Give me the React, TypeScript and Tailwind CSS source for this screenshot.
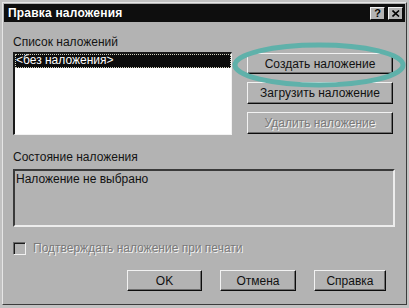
import React from "react";

const font = { fontFamily: '"Liberation Sans", Arial, sans-serif' };

function Btn({ children, disabled, className = "" }: { children: React.ReactNode; disabled?: boolean; className?: string }) {
  return (
    <div
      className={`flex items-center justify-center border-t border-l border-[#f2f2f2] border-r border-b border-r-[#0c0c0c] border-b-[#0c0c0c] shadow-[inset_-1px_-1px_0_#6e6e6e] bg-[#b3b3b3] text-[12px] ${
        disabled ? "text-[#7a7a7a] [text-shadow:1px_1px_0_#f4f4f4]" : "text-[#111]"
      } ${className}`}
    >
      {children}
    </div>
  );
}

export default function App() {
  return (
    <div className="w-[409px] h-[308px] bg-[#c2c2c2] overflow-hidden" style={font}>
      <div className="ml-[2px] mt-[2px] w-[405px] h-[303px] bg-[#b3b3b3] border-t border-l border-[#e6e6e6] border-r border-b border-r-[#3c3c3c] border-b-[#3c3c3c] flex flex-col relative">
        {/* title bar */}
        <div className="mx-[1px] mt-[1px] h-[18px] bg-[#0e0e0e] flex items-center justify-between pl-[4px] pr-[2px]">
          <span className="text-white font-bold text-[12px] tracking-[0.2px]">Правка наложения</span>
          <div className="flex">
            <div className="w-[15px] h-[13px] bg-[#b3b3b3] border-t border-l border-[#f2f2f2] border-r border-b border-r-[#0c0c0c] border-b-[#0c0c0c] flex items-center justify-center text-[11px] font-bold leading-none text-black">?</div>
            <div className="ml-[3px] w-[15px] h-[13px] bg-[#b3b3b3] border-t border-l border-[#f2f2f2] border-r border-b border-r-[#0c0c0c] border-b-[#0c0c0c] flex items-center justify-center">
              <svg width="8" height="7" viewBox="0 0 8 7">
                <path d="M0.5 0.5 L7 6.5 M7 0.5 L0.5 6.5" stroke="#000" strokeWidth="1.6" />
              </svg>
            </div>
          </div>
        </div>

        <div className="px-[10px] flex flex-col">
          <div className="mt-[13px] text-[12px] leading-[14px] text-[#141414]">Список наложений</div>
          <div className="mt-[3px] flex">
            {/* listbox */}
            <div className="w-[219px] h-[83px] border-t-2 border-l-2 border-t-[#1a1a1a] border-l-[#1a1a1a] border-r border-b border-r-[#f2f2f2] border-b-[#f2f2f2] bg-white">
              <div className="h-[14px] bg-[#0c0c0c] text-white text-[12px] leading-[13px] pl-[1px] outline-1 outline-dotted outline-[#d0d0c0] -outline-offset-1">
                &lt;без наложения&gt;
              </div>
            </div>
            <div className="ml-[15px] flex flex-col gap-[8px] mt-[1px]">
              <Btn className="w-[146px] h-[21px]">Создать наложение</Btn>
              <Btn className="w-[146px] h-[22px]">Загрузить наложение</Btn>
              <Btn disabled className="w-[146px] h-[22px]">Удалить наложение</Btn>
            </div>
          </div>

          <div className="mt-[15px] text-[12px] leading-[14px] text-[#141414]">Состояние наложения</div>
          <div className="mt-[5px] w-[382px] h-[58px] border-t-2 border-l-2 border-t-[#3a3a3a] border-l-[#3a3a3a] border-r-2 border-b-2 border-r-[#ededed] border-b-[#ededed] bg-[#b3b3b3] text-[12px] leading-[14px] text-[#111] pl-[1px] pt-[1px]">
            Наложение не выбрано
          </div>

          <div className="mt-[12px] flex items-center">
            <div className="w-[13px] h-[13px] border-t border-l border-[#6a6a6a] border-r border-b border-r-[#f0f0f0] border-b-[#f0f0f0] shadow-[inset_1px_1px_0_#1a1a1a] bg-[#b3b3b3]" />
            <span className="ml-[7px] text-[12px] text-[#7a7a7a] [text-shadow:1px_1px_0_#f4f4f4]">Подтверждать наложение при печати</span>
          </div>

          <div className="mt-[13px] flex justify-end gap-[18px] pr-[10px]">
            <Btn className="w-[75px] h-[21px]">OK</Btn>
            <Btn className="w-[76px] h-[21px]">Отмена</Btn>
            <Btn className="w-[72px] h-[21px]">Справка</Btn>
          </div>
        </div>

        {/* highlight ellipse */}
        <svg className="absolute left-[228px] top-[37px] pointer-events-none" width="178" height="50" viewBox="0 0 178 50">
          <ellipse cx="88" cy="25" rx="84" ry="20" fill="none" stroke="#5fb1aa" strokeWidth="5" />
        </svg>
      </div>
    </div>
  );
}
